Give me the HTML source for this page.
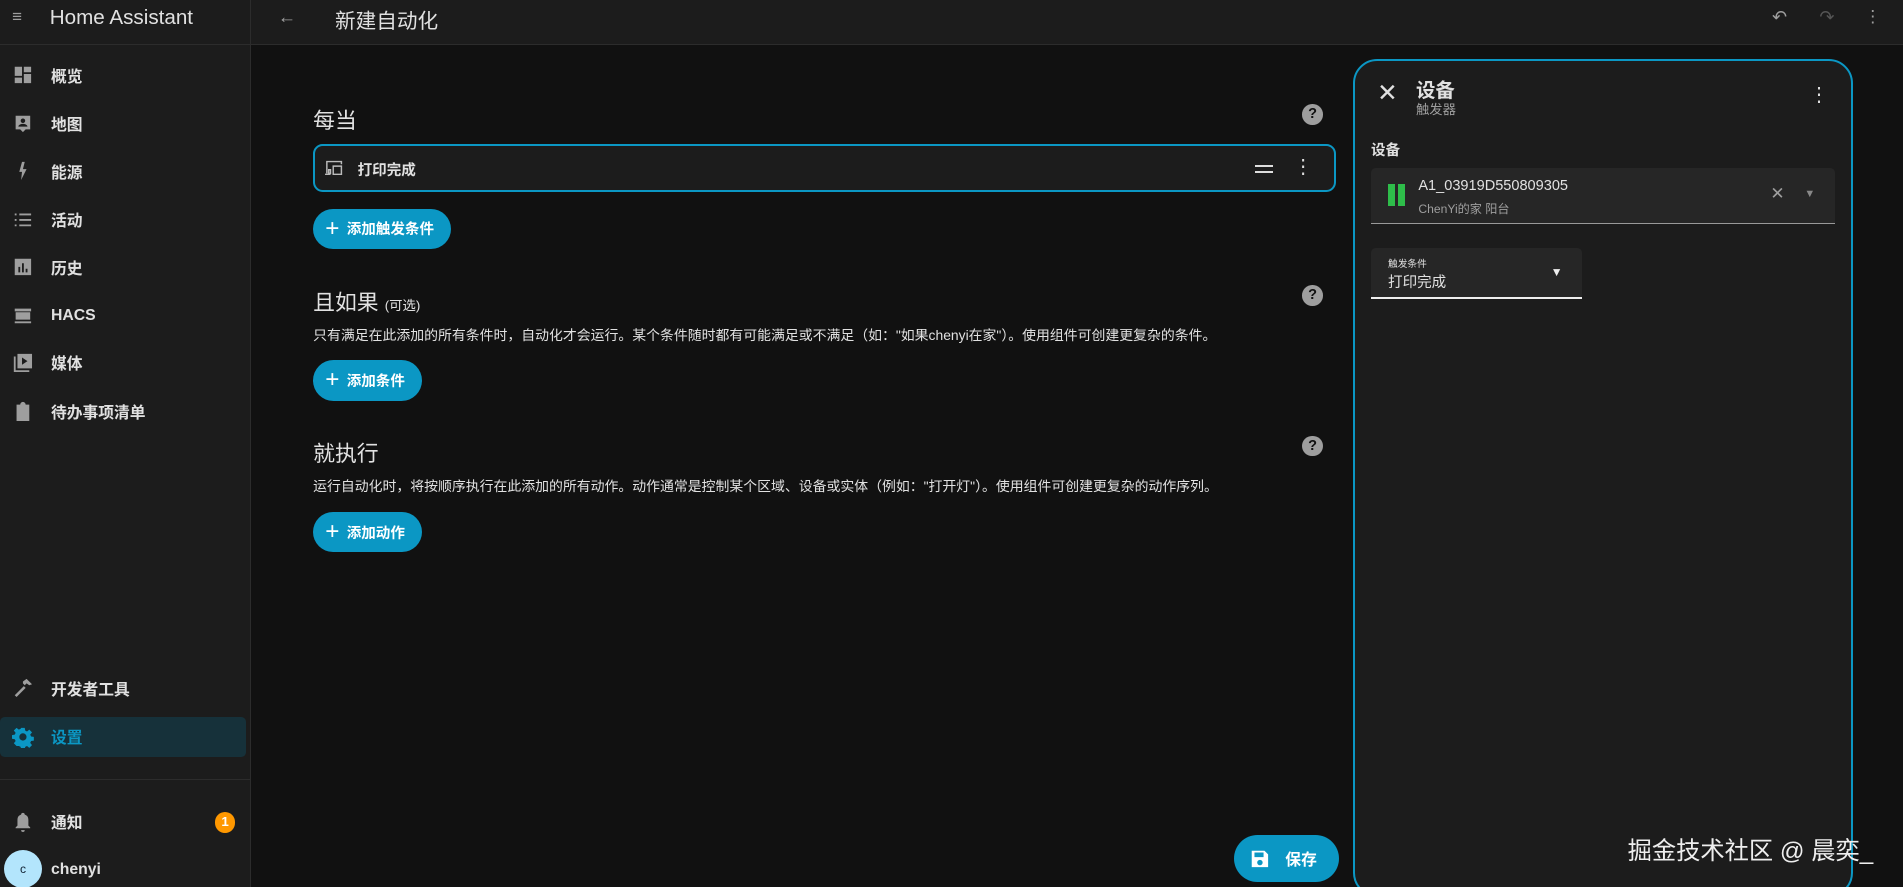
<!DOCTYPE html>
<html><head><meta charset="utf-8"><style>
*{box-sizing:border-box;margin:0;padding:0}
html,body{width:1903px;height:887px;overflow:hidden;background:#111}
body{font-family:"Liberation Sans","Noto Sans CJK SC",sans-serif;color:#e1e1e1}
#r{zoom:1.2137;width:1568px;height:731px;position:relative;background:#111;overflow:hidden}
.a{position:absolute}
.side{left:0;top:0;width:207px;height:731px;background:#1c1c1c;border-right:1px solid #2c2c2c}
.item{position:absolute;left:0;width:207px;height:36px;display:flex;align-items:center;font-size:13px;font-weight:bold;color:#e1e1e1}
.item svg{position:absolute;left:10px;width:18px;height:18px;fill:#9e9e9e}
.item span{position:absolute;left:42px}
.hdr{left:207px;top:0;width:1361px;height:37px;background:#1c1c1c;border-bottom:1px solid #2c2c2c}
.btn{background:#0b97c4;color:#fff;border-radius:18px;height:33px;display:flex;align-items:center;font-size:12px;font-weight:bold;padding:0 14px 0 10px}
.btn b{font-size:20px;font-weight:normal;margin-right:6px;line-height:1}
.h2{font-size:18px;color:#e1e1e1}
.p{font-size:11.45px;color:#e1e1e1}
.q{width:17px;height:17px;border-radius:50%;background:#9e9e9e;color:#111;font-size:12px;font-weight:bold;text-align:center;line-height:17px}
</style></head><body><div id="r">
<div class="a side">
 <div class="a" style="left:10px;top:6px;font-size:14px;color:#9e9e9e">&#8801;</div>
 <div class="a" style="left:41px;top:5px;font-size:17px;color:#e1e1e1">Home Assistant</div>
 <div class="a" style="left:0;top:36px;width:207px;height:1px;background:#2c2c2c"></div>
 <div class="item" style="top:44px"><svg viewBox="0 0 24 24"><path d="M3 3h8v10H3zM13 3h8v6h-8zM13 11h8v10h-8zM3 15h8v6H3z"/></svg><span>概览</span></div>
 <div class="item" style="top:84px"><svg viewBox="0 0 24 24"><path d="M4 3h16v15h-5l-3 3-3-3H4zM12 6a2.5 2.5 0 100 5 2.5 2.5 0 000-5zM7 15h10c0-2-3-3-5-3s-5 1-5 3z"/></svg><span>地图</span></div>
 <div class="item" style="top:123px"><svg viewBox="0 0 24 24"><path d="M11 2h3l-2 8h4l-6 12 1-9H8z"/></svg><span>能源</span></div>
 <div class="item" style="top:163px"><svg viewBox="0 0 24 24"><path d="M3 5h2v2H3zM8 5h13v2H8zM3 11h2v2H3zM8 11h13v2H8zM3 17h2v2H3zM8 17h13v2H8z"/></svg><span>活动</span></div>
 <div class="item" style="top:202px"><svg viewBox="0 0 24 24"><path d="M3 3h18v18H3zM7 12v6h2v-6zM11 8v10h2V8zM15 14v4h2v-4z"/></svg><span>历史</span></div>
 <div class="item" style="top:242px"><svg viewBox="0 0 24 24"><path d="M3 4h18v3H3zM4 8h16v8H4zM3 18h18v2H3z"/></svg><span>HACS</span></div>
 <div class="item" style="top:281px"><svg viewBox="0 0 24 24"><path d="M2 5h2v15h15v2H2zM6 2h16v16H6zM11 6v8l6-4z"/></svg><span>媒体</span></div>
 <div class="item" style="top:321px"><svg viewBox="0 0 24 24"><path d="M5 4h4a3 3 0 016 0h4v18H5zM8 10h8v2H8zM8 14h8v2H8z"/></svg><span>待办事项清单</span></div>
 <div class="item" style="top:549px"><svg viewBox="0 0 24 24"><path d="M3 20l10-10 2 2L5 22zM12 5l4-3 6 6-3 1-3-2-2 2-2-2z"/></svg><span>开发者工具</span></div>
 <div class="a" style="left:0;top:591px;width:203px;height:33px;background:#16313a;border-radius:4px"></div>
 <div class="item" style="top:589px"><svg viewBox="0 0 24 24" style="fill:#0b97c4"><path d="M12 8a4 4 0 100 8 4 4 0 000-8zM10 2h4l.5 3 2 1 2.5-2 3 3-2 2.5 1 2 3 .5v4l-3 .5-1 2 2 2.5-3 3-2.5-2-2 1-.5 3h-4l-.5-3-2-1L5 22l-3-3 2-2.5-1-2L0 14v-4l3-.5 1-2L2 5l3-3 2.5 2 2-1z"/></svg><span style="color:#0b97c4">设置</span></div>
 <div class="a" style="left:0;top:642px;width:207px;height:1px;background:#2c2c2c"></div>
 <div class="item" style="top:659px"><svg viewBox="0 0 24 24"><path d="M12 2a2 2 0 012 2c3 1 4 3 4 6v6l2 2v1H4v-1l2-2v-6c0-3 1-5 4-6a2 2 0 012-2zM10 21h4a2 2 0 01-4 0z"/></svg><span>通知</span></div>
 <div class="a" style="left:177px;top:669px;width:17px;height:17px;border-radius:50%;background:#ff9800;color:#fff;font-size:11px;text-align:center;line-height:17px;font-weight:bold">1</div>
 <div class="a" style="left:3px;top:700px;width:32px;height:32px;border-radius:50%;background:#b3e5fc;color:#123;font-size:10px;text-align:center;line-height:32px">c</div>
 <div class="a" style="left:42px;top:709px;font-size:13px;font-weight:bold">chenyi</div>
</div>
<div class="a hdr">
 <div class="a" style="left:22px;top:6px;font-size:15px;color:#9e9e9e">&#8592;</div>
 <div class="a" style="left:69px;top:3px;font-size:17px;color:#e1e1e1">新建自动化</div>
 <div class="a" style="left:1253px;top:6px;font-size:15px;color:#9e9e9e">&#8630;</div>
 <div class="a" style="left:1292px;top:6px;font-size:15px;color:#555">&#8631;</div>
 <div class="a" style="left:1329px;top:6px;font-size:14px;color:#9e9e9e">&#8942;</div>
</div>
<div class="a h2" style="left:258px;top:86px">每当</div>
<div class="a q" style="left:1073px;top:86px">?</div>
<div class="a" style="left:258px;top:119px;width:843px;height:39px;border:2px solid #0b97c4;border-radius:8px;background:#1c1c1c">
 <svg class="a" style="left:6px;top:9px" width="20" height="18" viewBox="0 0 24 24" fill="none" stroke="#bbb" stroke-width="1.6"><path d="M4 18V5h16v3M2 19h6M11 10h9v9h-9zM6 14h2v4H6z"/></svg>
 <div class="a" style="left:35px;top:10px;font-size:12px;font-weight:bold">打印完成</div>
 <div class="a" style="left:774px;top:15px;width:15px;height:2px;background:#ddd"></div>
 <div class="a" style="left:774px;top:20px;width:15px;height:2px;background:#ddd"></div>
 <div class="a" style="left:806px;top:7px;font-size:16px;color:#ddd">&#8942;</div>
</div>
<div class="a btn" style="left:258px;top:172px"><b>+</b>添加触发条件</div>
<div class="a h2" style="left:258px;top:236px">且如果 <span style="font-size:11px">(可选)</span></div>
<div class="a q" style="left:1073px;top:235px">?</div>
<div class="a p" style="left:258px;top:268px">只有满足在此添加的所有条件时，自动化才会运行。某个条件随时都有可能满足或不满足（如："如果chenyi在家"）。使用组件可创建更复杂的条件。</div>
<div class="a btn" style="left:258px;top:297px"><b>+</b>添加条件</div>
<div class="a h2" style="left:258px;top:360px">就执行</div>
<div class="a q" style="left:1073px;top:359px">?</div>
<div class="a p" style="left:258px;top:392px">运行自动化时，将按顺序执行在此添加的所有动作。动作通常是控制某个区域、设备或实体（例如："打开灯"）。使用组件可创建更复杂的动作序列。</div>
<div class="a btn" style="left:258px;top:422px"><b>+</b>添加动作</div>
<div class="a btn" style="left:1017px;top:688px;height:39px;border-radius:20px;padding:0 18px 0 12px;font-size:13px"><svg width="18" height="18" viewBox="0 0 24 24" fill="#fff" style="margin-right:12px"><path d="M3 3h14l4 4v14H3zM6 5v5h10V5zM12 13a3 3 0 100 6 3 3 0 000-6z"/></svg>保存</div>
<div class="a" style="left:1115px;top:49px;width:412px;height:690px;border:2px solid #0b97c4;border-radius:20px;background:#1c1c1c">
 <div class="a" style="left:18px;top:14px;font-size:20px;color:#e1e1e1">&#10005;</div>
 <div class="a" style="left:50px;top:10px;font-size:16px;font-weight:bold">设备</div>
 <div class="a" style="left:50px;top:31px;font-size:11px;color:#9e9e9e">触发器</div>
 <div class="a" style="left:374px;top:18px;font-size:16px;color:#ddd">&#8942;</div>
 <div class="a" style="left:13px;top:64px;font-size:12px;font-weight:bold">设备</div>
 <div class="a" style="left:13px;top:88px;width:382px;height:46px;background:#262626;border-radius:4px 4px 0 0;border-bottom:1px solid #999">
  <div class="a" style="left:14px;top:13px;width:6px;height:18px;background:#2ebd4a"></div>
  <div class="a" style="left:22px;top:13px;width:6px;height:18px;background:#2ebd4a"></div>
  <div class="a" style="left:39px;top:8px;font-size:12px;color:#e1e1e1">A1_03919D550809305</div>
  <div class="a" style="left:39px;top:26px;font-size:10px;color:#9e9e9e">ChenYi的家 阳台</div>
  <div class="a" style="left:329px;top:13px;font-size:14px;color:#9e9e9e">&#10005;</div>
  <div class="a" style="left:357px;top:16px;font-size:9px;color:#888">&#9660;</div>
 </div>
 <div class="a" style="left:13px;top:154px;width:174px;height:42px;background:#262626;border-radius:4px 4px 0 0;border-bottom:2px solid #eee">
  <div class="a" style="left:14px;top:6px;font-size:8px">触发条件</div>
  <div class="a" style="left:14px;top:19px;font-size:12px">打印完成</div>
  <div class="a" style="left:148px;top:14px;font-size:10px;color:#eee">&#9660;</div>
 </div>
</div>
<div class="a" style="left:1341px;top:685px;font-size:20px;color:#eee">掘金技术社区 @ 晨奕_</div>
</div></body></html>
